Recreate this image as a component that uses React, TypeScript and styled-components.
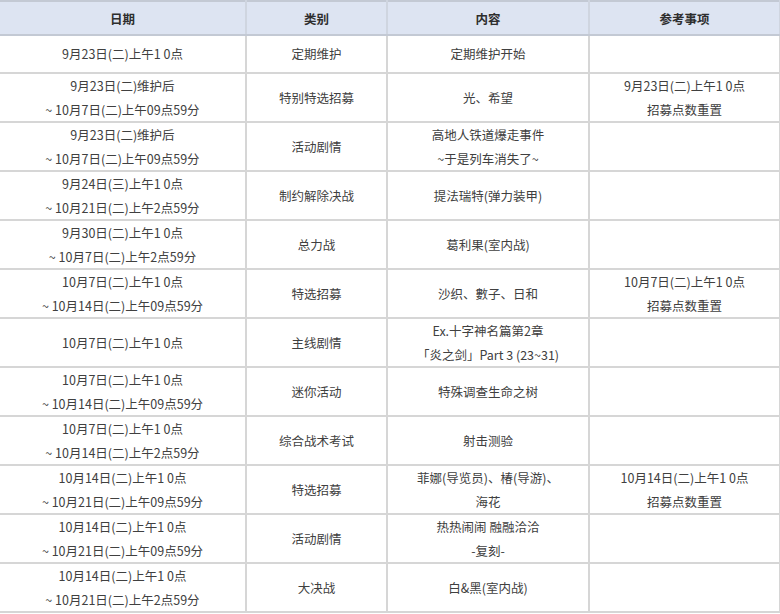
import React from "react";
import styled, { createGlobalStyle } from "styled-components";

const GlobalStyle = createGlobalStyle`
  html, body {
    margin: 0;
    padding: 0;
    background: #ffffff;
  }
  body {
    font-family: "Noto Sans CJK SC", "Noto Sans", sans-serif;
  }
`;

const Table = styled.table`
  width: 780px;
  table-layout: fixed;
  border-collapse: collapse;
  font-size: 12.5px;
  color: #404040;
`;

const HeadCell = styled.th`
  height: 32px;
  padding: 0;
  background: #dde4f2;
  color: #2e2e2e;
  font-weight: bold;
  font-size: 12.5px;
  text-align: center;
  border-top: 2px solid #c3c9d4;
  border-bottom: 2px solid #c3c9d4;
  border-left: 2px solid #cfd5e0;
  border-right: 2px solid #cfd5e0;

  &:first-child {
    border-left: none;
  }
`;

const Row = styled.tr<{ $short?: boolean }>`
  height: ${(p) => (p.$short ? "38px" : "47px")};
`;

const Cell = styled.td`
  padding: 0;
  text-align: center;
  vertical-align: middle;
  line-height: 23.5px;
  border: 2px solid #d6d6d6;

  &:first-child {
    border-left: none;
  }
`;

type Entry = {
  date: string[];
  kind: string;
  content: string[];
  note?: string[];
};

const entries: Entry[] = [
  { date: ["9月23日(二)上午1 0点"], kind: "定期维护", content: ["定期维护开始"] },
  {
    date: ["9月23日(二)维护后", "~ 10月7日(二)上午09点59分"],
    kind: "特别特选招募",
    content: ["光、希望"],
    note: ["9月23日(二)上午1 0点", "招募点数重置"],
  },
  {
    date: ["9月23日(二)维护后", "~ 10月7日(二)上午09点59分"],
    kind: "活动剧情",
    content: ["高地人铁道爆走事件", "~于是列车消失了~"],
  },
  {
    date: ["9月24日(三)上午1 0点", "~ 10月21日(二)上午2点59分"],
    kind: "制约解除决战",
    content: ["提法瑞特(弹力装甲)"],
  },
  {
    date: ["9月30日(二)上午1 0点", "~ 10月7日(二)上午2点59分"],
    kind: "总力战",
    content: ["葛利果(室内战)"],
  },
  {
    date: ["10月7日(二)上午1 0点", "~ 10月14日(二)上午09点59分"],
    kind: "特选招募",
    content: ["沙织、數子、日和"],
    note: ["10月7日(二)上午1 0点", "招募点数重置"],
  },
  {
    date: ["10月7日(二)上午1 0点"],
    kind: "主线剧情",
    content: ["Ex.十字神名篇第2章", "「炎之剑」Part 3 (23~31)"],
  },
  {
    date: ["10月7日(二)上午1 0点", "~ 10月14日(二)上午09点59分"],
    kind: "迷你活动",
    content: ["特殊调查生命之树"],
  },
  {
    date: ["10月7日(二)上午1 0点", "~ 10月14日(二)上午2点59分"],
    kind: "综合战术考试",
    content: ["射击测验"],
  },
  {
    date: ["10月14日(二)上午1 0点", "~ 10月21日(二)上午09点59分"],
    kind: "特选招募",
    content: ["菲娜(导览员)、椿(导游)、", "海花"],
    note: ["10月14日(二)上午1 0点", "招募点数重置"],
  },
  {
    date: ["10月14日(二)上午1 0点", "~ 10月21日(二)上午09点59分"],
    kind: "活动剧情",
    content: ["热热闹闹 融融洽洽", "-复刻-"],
  },
  {
    date: ["10月14日(二)上午1 0点", "~ 10月21日(二)上午2点59分"],
    kind: "大决战",
    content: ["白&黑(室内战)"],
  },
];

function Lines({ lines }: { lines?: string[] }) {
  if (!lines) return null;
  return (
    <>
      {lines.map((line, i) => (
        <React.Fragment key={i}>
          {i > 0 && <br />}
          {line}
        </React.Fragment>
      ))}
    </>
  );
}

function App() {
  return (
    <>
      <GlobalStyle />
      <Table>
        <colgroup>
          <col style={{ width: 246 }} />
          <col style={{ width: 141 }} />
          <col style={{ width: 202 }} />
          <col style={{ width: 191 }} />
        </colgroup>
        <thead>
          <tr>
            <HeadCell>日期</HeadCell>
            <HeadCell>类别</HeadCell>
            <HeadCell>内容</HeadCell>
            <HeadCell>参考事项</HeadCell>
          </tr>
        </thead>
        <tbody>
          {entries.map((e, i) => (
            <Row key={i} $short={i === 0}>
              <Cell>
                <Lines lines={e.date} />
              </Cell>
              <Cell>{e.kind}</Cell>
              <Cell>
                <Lines lines={e.content} />
              </Cell>
              <Cell>
                <Lines lines={e.note} />
              </Cell>
            </Row>
          ))}
        </tbody>
      </Table>
    </>
  );
}

export default App;
